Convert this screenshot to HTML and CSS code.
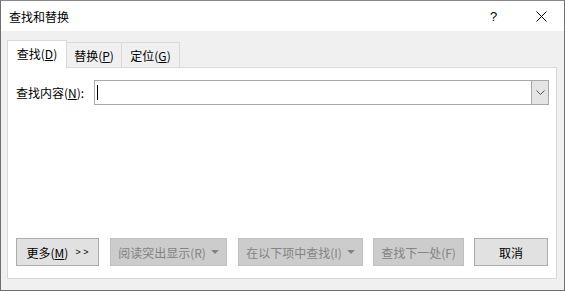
FILE: index.html
```html
<!DOCTYPE html>
<html lang="zh-CN">
<head>
  <meta charset="UTF-8" />
  <title>查找和替换</title>
  <link rel="stylesheet" href="styles.css">
</head>
<body>
  <div class="window">
    <div class="titlebar">
      <span class="title">查找和替换</span>
      <span class="help">?</span>
      <span class="close">
        <svg width="11" height="11" viewBox="0 0 11 11"><path d="M0.5 0.5L10.5 10.5M10.5 0.5L0.5 10.5" stroke="#000" stroke-width="1" fill="none"/></svg>
      </span>
    </div>
    <div class="content">
      <div class="tabs">
        <div class="tab active"><span>查找(<u>D</u>)</span></div>
        <div class="tab"><span>替换(<u>P</u>)</span></div>
        <div class="tab"><span>定位(<u>G</u>)</span></div>
      </div>
      <div class="panel">
        <div class="row">
          <label class="label">查找内容(<u>N</u>):</label>
          <div class="combo">
            <div class="field"><span class="caret"></span></div>
            <div class="drop">
              <svg width="9" height="6" viewBox="0 0 9 6"><path d="M0.5 0.5L4.5 4.5L8.5 0.5" stroke="#555" stroke-width="1" fill="none"/></svg>
            </div>
          </div>
        </div>
        <div class="buttons">
          <button class="btn more"><span>更多(<u>M</u>)</span><span class="arrows">&gt; &gt;</span></button>
          <button class="btn disabled reading"><span>阅读突出显示(R)</span><span class="tri"></span></button>
          <button class="btn disabled findin"><span>在以下项中查找(I)</span><span class="tri"></span></button>
          <button class="btn disabled next"><span>查找下一处(F)</span></button>
          <button class="btn cancel"><span>取消</span></button>
        </div>
      </div>
    </div>
  </div>
</body>
</html>
```

FILE: styles.css
```css
html, body {
  margin: 0;
  padding: 0;
}
body {
  font-family: "Noto Sans CJK SC", "Liberation Sans", sans-serif;
  font-size: 12px;
  color: #000;
}
.window {
  width: 565px;
  height: 291px;
  box-sizing: border-box;
  border: 1px solid #6f6f6f;
  border-top-color: #8a8a8a;
  background: #f0f0f0;
  display: flex;
  flex-direction: column;
}
.titlebar {
  height: 30px;
  background: #fff;
  display: flex;
  align-items: center;
  padding-left: 8px;
}
.title {
  flex: 1;
  font-size: 12px;
}
.help {
  width: 10px;
  margin-right: 36px;
  font-size: 13px;
  font-family: "Liberation Sans", sans-serif;
}
.close {
  display: flex;
  margin-right: 17px;
}
.content {
  flex: 1;
  display: flex;
  flex-direction: column;
  padding: 9px 7px 11px 6px;
}
.tabs {
  display: flex;
  align-items: flex-end;
  height: 27px;
}
.tab {
  height: 25px;
  box-sizing: border-box;
  border: 1px solid #d9d9d9;
  border-bottom: none;
  border-left: none;
  background: #f0f0f0;
  display: flex;
  align-items: center;
  justify-content: center;
  width: 55px;
  white-space: nowrap;
}
.tab:last-child {
  width: 58px;
}
.tab.active {
  height: 28px;
  width: 60px;
  border-left: 1px solid #d9d9d9;
  background: #fff;
  margin-bottom: -1px;
  position: relative;
  z-index: 1;
  padding-bottom: 2px;
}
.tab u, .label u, .btn u {
  text-underline-offset: 1px;
}
.panel {
  flex: 1;
  background: #fff;
  border: 1px solid #d9d9d9;
  display: flex;
  flex-direction: column;
  justify-content: space-between;
  padding: 12px 7px 12px 8px;
}
.row {
  display: flex;
  align-items: center;
}
.label {
  width: 78px;
  white-space: nowrap;
}
.combo {
  flex: 1;
  display: flex;
  height: 25px;
  box-sizing: border-box;
  border: 1px solid #a8a8a8;
}
.field {
  flex: 1;
  display: flex;
  align-items: center;
  padding-left: 2px;
}
.caret {
  width: 1px;
  height: 15px;
  background: #000;
}
.drop {
  width: 16px;
  background: #e4e4e4;
  border-left: 1px solid #a8a8a8;
  display: flex;
  align-items: center;
  justify-content: center;
}
.buttons {
  display: flex;
  gap: 11px;
}
.btn {
  height: 28px;
  box-sizing: border-box;
  border: 1px solid #adadad;
  background: #e1e1e1;
  font-family: inherit;
  font-size: 12px;
  color: #000;
  padding: 0;
  display: flex;
  align-items: center;
  justify-content: center;
  white-space: nowrap;
}
.btn.disabled {
  background: #cccccc;
  border-color: #bfbfbf;
  color: #838383;
}
.more { width: 83px; }
.reading { width: 117px; }
.findin { width: 125px; }
.next { width: 91px; margin-left: -1px; }
.cancel { width: 74px; margin-left: -1px; }
.arrows {
  font-family: "Liberation Sans", sans-serif;
  font-size: 9px;
  margin-left: 7px;
}
.tri {
  width: 0;
  height: 0;
  border-left: 4px solid transparent;
  border-right: 4px solid transparent;
  border-top: 4px solid #838383;
  margin-left: 5px;
}
```
